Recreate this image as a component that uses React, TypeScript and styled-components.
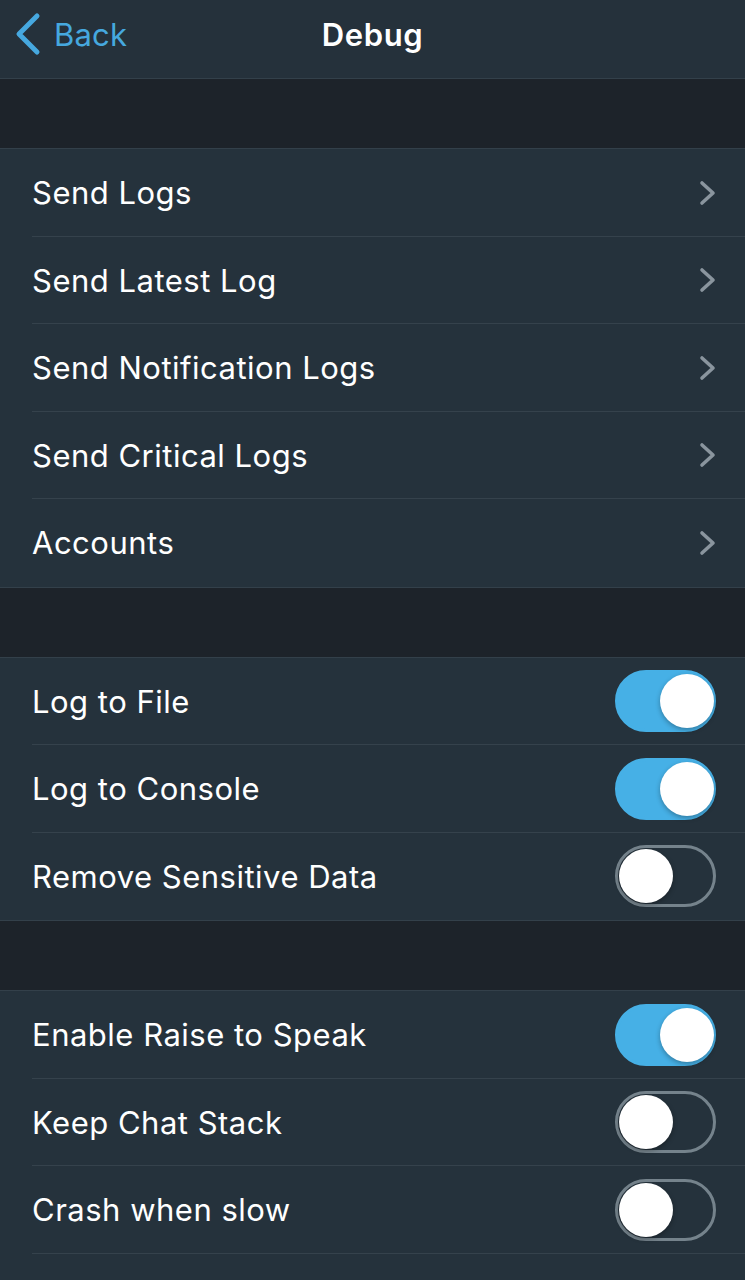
import React from 'react'
import styled, { createGlobalStyle } from 'styled-components'

const GlobalStyle = createGlobalStyle`
  html, body {
    margin: 0;
    padding: 0;
    background: #1d232a;
  }
  body {
    font-family: Inter, "Noto Sans", sans-serif;
    -webkit-font-smoothing: antialiased;
  }
`

const Screen = styled.div`
  width: 745px;
  min-height: 1280px;
  background: #1d232a;
  overflow: hidden;
`

const NavBar = styled.div`
  position: relative;
  height: 79px;
  box-sizing: border-box;
  padding-bottom: 10px;
  display: flex;
  align-items: center;
  justify-content: center;
  background: #25313b;
  border-bottom: 1px solid #33404a;
`

const BackButton = styled.div`
  position: absolute;
  left: 14px;
  top: 0;
  bottom: 10px;
  display: flex;
  align-items: center;
  gap: 12px;
  color: #46a8df;
  font-size: 31px;
  letter-spacing: 0.2px;
`

const NavTitle = styled.div`
  color: #ffffff;
  font-size: 31px;
  font-weight: 600;
  letter-spacing: 0.6px;
`

const Gap = styled.div`
  height: 69px;
  background: #1d232a;
`

const Section = styled.div`
  background: #25323c;
  border-top: 1px solid #33404a;
  border-bottom: 1px solid #33404a;
`

const Row = styled.div<{ $last?: boolean }>`
  position: relative;
  height: 87.5px;
  box-sizing: border-box;
  display: flex;
  align-items: center;
  justify-content: space-between;
  padding: 0 30px 0 32px;
  &::after {
    content: '';
    display: ${p => (p.$last ? 'none' : 'block')};
    position: absolute;
    left: 32px;
    right: 0;
    bottom: 0;
    height: 1px;
    background: #35424c;
  }
`

const Label = styled.span`
  color: #ffffff;
  font-size: 31px;
  letter-spacing: 0.5px;
`

const ChevronBox = styled.div`
  display: flex;
  margin-right: -2px;
`

const Toggle = styled.div<{ $on: boolean }>`
  position: relative;
  width: 101px;
  height: 62px;
  box-sizing: border-box;
  border-radius: 31px;
  margin-right: -1px;
  background: ${p => (p.$on ? '#46b0e6' : 'transparent')};
  border: 3px solid ${p => (p.$on ? '#46b0e6' : '#75838c')};
`

const Knob = styled.div<{ $on: boolean }>`
  position: absolute;
  top: 1px;
  left: ${p => (p.$on ? '42px' : '1px')};
  width: 54px;
  height: 54px;
  border-radius: 50%;
  background: #ffffff;
  box-shadow: 0 2px 5px rgba(0, 0, 0, 0.3);
`

const Chevron = () => (
  <ChevronBox>
    <svg width="18" height="26" viewBox="0 0 18 26">
      <path
        d="M3 3 L14 13 L3 23"
        fill="none"
        stroke="#8a959e"
        strokeWidth="3.6"
        strokeLinecap="round"
        strokeLinejoin="round"
      />
    </svg>
  </ChevronBox>
)

const BackChevron = () => (
  <svg width="28" height="44" viewBox="0 0 28 44">
    <path
      d="M23 4 L5 22 L23 40"
      fill="none"
      stroke="#46a8df"
      strokeWidth="5"
      strokeLinecap="round"
      strokeLinejoin="round"
    />
  </svg>
)

type Item = { label: string; toggle?: boolean; on?: boolean; blank?: boolean }

const sections: { items: Item[] }[] = [
  {
    items: [
      { label: 'Send Logs' },
      { label: 'Send Latest Log' },
      { label: 'Send Notification Logs' },
      { label: 'Send Critical Logs' },
      { label: 'Accounts' },
    ],
  },
  {
    items: [
      { label: 'Log to File', toggle: true, on: true },
      { label: 'Log to Console', toggle: true, on: true },
      { label: 'Remove Sensitive Data', toggle: true, on: false },
    ],
  },
  {
    items: [
      { label: 'Enable Raise to Speak', toggle: true, on: true },
      { label: 'Keep Chat Stack', toggle: true, on: false },
      { label: 'Crash when slow', toggle: true, on: false },
      { label: '', blank: true },
    ],
  },
]

export default function App() {
  return (
    <Screen>
      <GlobalStyle />
      <NavBar>
        <BackButton>
          <BackChevron />
          Back
        </BackButton>
        <NavTitle>Debug</NavTitle>
      </NavBar>
      {sections.map((s, i) => (
        <React.Fragment key={i}>
          <Gap />
          <Section>
            {s.items.map((it, j) => (
              <Row key={j} $last={j === s.items.length - 1}>
                {!it.blank && <Label>{it.label}</Label>}
                {it.blank ? null : it.toggle ? (
                  <Toggle $on={!!it.on}>
                    <Knob $on={!!it.on} />
                  </Toggle>
                ) : (
                  <Chevron />
                )}
              </Row>
            ))}
          </Section>
        </React.Fragment>
      ))}
    </Screen>
  )
}
